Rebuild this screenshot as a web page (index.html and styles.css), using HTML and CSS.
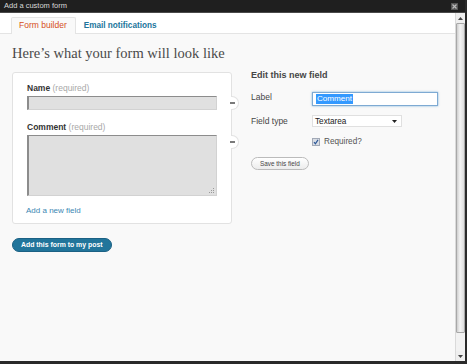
FILE: index.html
```html
<!DOCTYPE html>
<html lang="en">
<head>
    <meta charset="UTF-8">
    <meta name="viewport" content="width=device-width, initial-scale=1.0">
    <title>Add a custom form</title>
    <link rel="stylesheet" href="styles.css">
</head>
<body>
    <div class="window">
        <div class="titlebar">
            <span class="title">Add a custom form</span>
            <span class="close">
                <svg width="7" height="7" viewBox="0 0 7 7"><path d="M1.5 1.5 L5.5 5.5 M5.5 1.5 L1.5 5.5" stroke="#bbb" stroke-width="1.2"/></svg>
            </span>
        </div>
        <div class="frame">
            <div class="panel">
                <div class="tabs">
                    <a class="tab active">Form builder</a>
                    <a class="tab">Email notifications</a>
                </div>
                <div class="content">
                    <h2>Here’s what your form will look like</h2>
                    <div class="builder">
                        <div class="preview-col">
                            <div class="card">
                                <div class="field">
                                    <div class="field-label"><b>Name</b> <span class="req">(required)</span></div>
                                    <div class="control">
                                        <div class="fake-input"></div>
                                        <span class="remove"></span>
                                    </div>
                                </div>
                                <div class="field">
                                    <div class="field-label"><b>Comment</b> <span class="req">(required)</span></div>
                                    <div class="control">
                                        <div class="fake-textarea">
                                            <svg class="grip" width="6" height="6" viewBox="0 0 6 6">
                                                <rect x="4" y="0" width="1" height="1" fill="#999"/>
                                                <rect x="2" y="2" width="1" height="1" fill="#999"/>
                                                <rect x="4" y="2" width="1" height="1" fill="#999"/>
                                                <rect x="0" y="4" width="1" height="1" fill="#999"/>
                                                <rect x="2" y="4" width="1" height="1" fill="#999"/>
                                                <rect x="4" y="4" width="1" height="1" fill="#999"/>
                                            </svg>
                                        </div>
                                        <span class="remove"></span>
                                    </div>
                                </div>
                                <a class="add-field">Add a new field</a>
                            </div>
                            <button class="btn-primary">Add this form to my post</button>
                        </div>

                        <div class="edit-panel">
                            <h3>Edit this new field</h3>
                            <div class="row">
                                <span class="row-label">Label</span>
                                <div class="text-input"><span class="selected">Comment</span></div>
                            </div>
                            <div class="row row-select">
                                <span class="row-label">Field type</span>
                                <div class="select">
                                    <span>Textarea</span>
                                    <svg width="5" height="3" viewBox="0 0 5 3"><path d="M0 0 H5 L2.5 3 Z" fill="#222"/></svg>
                                </div>
                            </div>
                            <div class="row row-check">
                                <span class="checkbox">
                                    <svg width="6" height="6" viewBox="0 0 6 6"><path d="M1 3.2 L2.4 4.8 L5 0.8" stroke="#2b5797" stroke-width="1.2" fill="none"/></svg>
                                </span>
                                <span>Required?</span>
                            </div>
                            <button class="btn-secondary">Save this field</button>
                        </div>
                    </div>
                </div>
            </div>
            <div class="scrollbar">
                <div class="sb-arrow">
                    <svg width="5" height="3" viewBox="0 0 5 3"><path d="M0 3 H5 L2.5 0 Z" fill="#444"/></svg>
                </div>
                <div class="sb-thumb"></div>
                <div class="sb-track"></div>
                <div class="sb-arrow">
                    <svg width="5" height="3" viewBox="0 0 5 3"><path d="M0 0 H5 L2.5 3 Z" fill="#444"/></svg>
                </div>
            </div>
        </div>
    </div>
</body>
</html>
```

FILE: styles.css
```css
body {
    margin: 0;
    padding: 0;
    background-color: #2a2a2a;
    font-family: 'Liberation Sans', Arial, sans-serif;
}
.window {
    width: 467px;
    height: 364px;
    display: flex;
    flex-direction: column;
    box-sizing: border-box;
    border-right: 2px solid #2a2a2a;
    border-bottom: 3px solid #2a2a2a;
}
.titlebar {
    height: 12px;
    background-color: #1f1f1f;
    border-bottom: 1px solid #4a4a4a;
    display: flex;
    align-items: center;
    justify-content: space-between;
    padding: 0 7px 0 4px;
}
.title {
    color: #d8d8d8;
    font-size: 7.5px;
    line-height: 12px;
}
.close {
    width: 7px;
    height: 7px;
    background-color: #555;
    display: flex;
}
.frame {
    flex: 1;
    display: flex;
    min-height: 0;
}
.panel {
    flex: 1;
    background-color: #f9f9f9;
    display: flex;
    flex-direction: column;
}

/* tabs */
.tabs {
    height: 16px;
    padding: 4px 0 0 11px;
    background-color: white;
    border-bottom: 1px solid #e4e4e4;
    display: flex;
}
.tab {
    font-size: 8.5px;
    line-height: 11px;
    padding: 2px 7px 3px 7px;
    border: 1px solid transparent;
    border-bottom: 0;
    color: #21759b;
    font-weight: bold;
    font-size: 8.2px;
}
.tab.active {
    color: #d54e21;
    font-weight: normal;
    font-size: 8.5px;
    padding-right: 8px;
    background-color: #f9f9f9;
    border-color: #e4e4e4;
    margin-bottom: -1px;
    border-radius: 2px 2px 0 0;
}

.content {
    padding: 10px 0 0 12px;
}
h2 {
    font-family: 'Liberation Serif', Georgia, serif;
    font-weight: normal;
    font-size: 14.5px;
    line-height: 18px;
    color: #4a4a4a;
    margin: 0 0 10px 0;
}
.builder {
    display: flex;
    align-items: flex-start;
    gap: 19px;
}

/* form preview */
.preview-col {
    width: 220px;
}
.card {
    background-color: white;
    border: 1px solid #e2e2e2;
    border-radius: 3px;
    padding: 10px 14px 7px 14px;
}
.field + .field {
    margin-top: 12px;
}
.field-label {
    font-size: 8.5px;
    line-height: 10px;
    color: #333;
    margin-bottom: 3px;
}
.req {
    color: #a8a8a8;
}
.control {
    position: relative;
}
.fake-input, .fake-textarea {
    box-sizing: border-box;
    background-color: #e0e0e0;
    border: 1px solid #d2d2d2;
    border-top-color: #8c8c8c;
    border-left: 2px solid #8c8c8c;
}
.fake-input {
    height: 14px;
}
.fake-textarea {
    height: 61px;
    position: relative;
}
.grip {
    position: absolute;
    right: 1px;
    bottom: 1px;
}
.remove {
    position: absolute;
    top: 0;
    right: -22px;
    width: 7px;
    height: 12px;
    background-color: white;
    border: 1px solid #e2e2e2;
    border-left: 0;
    border-radius: 0 7px 7px 0;
}
.remove::after {
    content: "";
    position: absolute;
    left: -1px;
    top: 5px;
    width: 5px;
    height: 2px;
    background-color: #7a7a7a;
}
.add-field {
    display: block;
    margin-top: 10px;
    font-size: 8px;
    line-height: 10px;
    color: #3b87b3;
    padding-left: 0;
    margin-left: -1px;
}
button {
    font-family: 'Liberation Sans', Arial, sans-serif;
    cursor: pointer;
}
.btn-primary {
    margin-top: 14px;
    height: 14px;
    padding: 0 8px;
    font-size: 6.9px;
    line-height: 12px;
    font-weight: bold;
    color: white;
    background-color: #21759b;
    border: 1px solid #1b6184;
    border-radius: 7px;
}

/* edit panel */
.edit-panel {
    font-size: 8.5px;
    color: #464646;
}
h3 {
    font-size: 9px;
    line-height: 10px;
    color: #464646;
    margin: -2px 0 12px 0;
}
.row {
    display: flex;
    align-items: flex-start;
}
.row-label {
    width: 61px;
    line-height: 10px;
    padding-top: 0;
}
.text-input {
    box-sizing: border-box;
    width: 126px;
    height: 14px;
    border: 1px solid #7eaad3;
    box-shadow: 0 0 2px rgba(40, 130, 200, 0.6);
    background-color: white;
    padding: 1px 3px;
    font-size: 8.1px;
    line-height: 10px;
}
.selected {
    background-color: #3399ff;
    color: white;
    display: inline-block;
    padding: 0 1px;
}
.row-select {
    margin-top: 9px;
}
.row-select .row-label {
    padding-top: 1px;
}
.select {
    box-sizing: border-box;
    width: 90px;
    height: 12px;
    border: 1px solid #e0e0e0;
    background-color: white;
    display: flex;
    align-items: center;
    justify-content: space-between;
    padding: 0 4px 0 2px;
    font-size: 8.2px;
    color: #222;
}
.row-check {
    margin-top: 10px;
    padding-left: 61px;
    align-items: center;
    gap: 4px;
    line-height: 10px;
    font-size: 8.2px;
    color: #555;
}
.checkbox {
    box-sizing: border-box;
    width: 8px;
    height: 8px;
    background-color: #d9dde4;
    border: 1px solid #a2a9b6;
    display: flex;
}
.btn-secondary {
    display: block;
    margin-top: 10px;
    height: 13px;
    padding: 0 8px;
    font-size: 6.4px;
    line-height: 11px;
    color: #464646;
    background: linear-gradient(#ffffff, #ececec);
    border: 1px solid #bbb;
    border-radius: 7px;
}

/* scrollbar */
.scrollbar {
    width: 9px;
    background-color: #efefef;
    border-left: 1px solid #dadada;
    display: flex;
    flex-direction: column;
}
.sb-arrow {
    height: 10px;
    display: flex;
    align-items: center;
    justify-content: center;
}
.sb-thumb {
    height: 310px;
    box-sizing: border-box;
    border: 1px solid #a8a8a8;
    border-radius: 1px;
    background: linear-gradient(to right, #cfcfcf, #f4f4f4 45%, #dcdcdc);
}
.sb-track {
    flex: 1;
    background-color: #f2f2f2;
}
```
